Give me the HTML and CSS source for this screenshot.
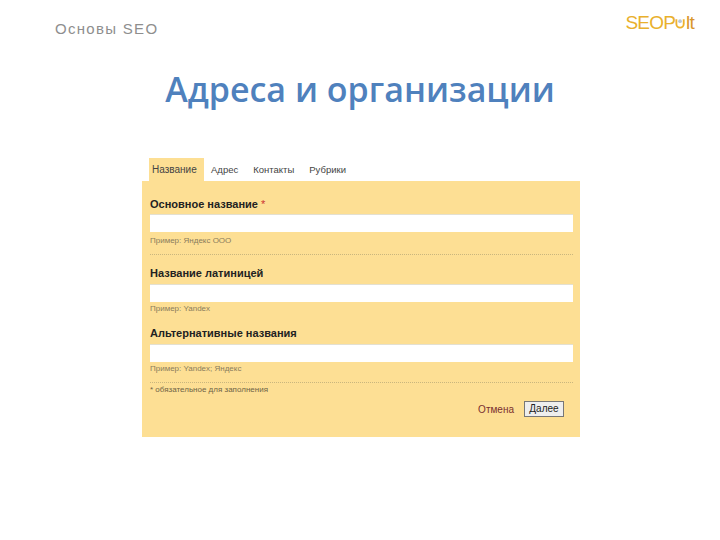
FILE: index.html
```html
<!DOCTYPE html>
<html lang="ru">
<head>
<meta charset="utf-8">
<title>Адреса и организации</title>
<link rel="stylesheet" href="styles.css">
</head>
<body>
<div class="slide">
  <header class="top">
    <span class="course">Основы SEO</span>
    <span class="logo"><span class="logo-seo">SEOP</span><svg class="logo-u" viewBox="0 0 12 12" width="11" height="12"><path d="M1.5 2v5a4 4 0 0 0 8 0V2" fill="none" stroke="#eeb22c" stroke-width="2"/><circle cx="5.5" cy="4" r="2" fill="#b9c6d8"/></svg><span class="logo-lt">lt</span></span>
  </header>
  <h1 class="title">Адреса и организации</h1>
  <div class="form-wrap">
    <nav class="tabs">
      <span class="tab active">Название</span>
      <span class="tab">Адрес</span>
      <span class="tab">Контакты</span>
      <span class="tab">Рубрики</span>
    </nav>
    <form class="panel">
      <div class="field field-main">
        <div class="label">Основное название <span class="req">*</span></div>
        <div class="input"></div>
        <div class="hint">Пример: Яндекс ООО</div>
      </div>
      <div class="field field-latin">
        <div class="label">Название латиницей</div>
        <div class="input"></div>
        <div class="hint">Пример: Yandex</div>
      </div>
      <div class="field field-alt">
        <div class="label">Альтернативные названия</div>
        <div class="input"></div>
        <div class="hint">Пример: Yandex; Яндекс</div>
      </div>
      <div class="note">* обязательное для заполнения</div>
      <div class="actions">
        <span class="cancel">Отмена</span>
        <span class="next">Далее</span>
      </div>
    </form>
  </div>
</div>
</body>
</html>
```
FILE: styles.css
```css
* { box-sizing: border-box; }
html, body { margin: 0; padding: 0; background: #fff; }
.slide { width: 720px; height: 540px; overflow: hidden; font-family: "Liberation Sans", Arial, sans-serif; }
.top { display: flex; justify-content: space-between; align-items: flex-start; padding: 21px 26px 0 55px; height: 68px; }
.course { font-size: 15px; line-height: 16px; letter-spacing: 1.3px; color: #8e8e8e; }
.logo { display: flex; align-items: baseline; margin-top: -9px; font-size: 19px; line-height: 22px; letter-spacing: -0.8px; color: #eeb22c; }
.logo-seo { color: #e9b02c; }
.logo-u { margin: 0 0 -1px 0; }
.logo-lt { color: #d9962a; }
.title { margin: 0; text-align: center; font-family: "Open Sans", sans-serif; font-weight: 600; font-size: 34px; line-height: 42px; color: #4f81bd; }
.form-wrap { width: 438px; margin: 48px 0 0 142px; }
.tabs { display: flex; height: 23px; padding-left: 7px; font-size: 9.5px; color: #444; }
.tab { padding: 6px 11px 0 4px; line-height: 12px; }
.tab.active { background: #fddf94; width: 55px; padding-left: 3px; margin-right: 3px; font-size: 10px; }
.panel { background: #fddf94; height: 256px; padding: 17px 7px 0 8px; }
.field-main { height: 57px; border-bottom: 1px dotted #c9b67e; }
.field-latin { height: 50px; margin-top: 12px; }
.field-alt { height: 56px; margin-top: 10px; border-bottom: 1px dotted #c9b67e; }
.label { font-size: 11px; font-weight: bold; line-height: 13px; color: #222; }
.req { color: #c33; font-weight: normal; }
.input { height: 18px; margin-top: 4px; background: #fff; border-top: 1px solid #e4e0d0; }
.field-main .input { margin-top: 3px; }
.hint { margin-top: 2px; font-size: 8px; line-height: 10px; color: #8a7c5c; }
.field-main .hint { margin-top: 4px; }
.note { margin-top: 2px; font-size: 8px; line-height: 10px; color: #6f6346; }
.actions { display: flex; justify-content: flex-end; align-items: center; gap: 10px; margin-top: 6px; padding-right: 9px; }
.cancel { font-size: 10px; color: #7a3030; }
.next { width: 40px; height: 16px; border: 1px solid #777; background: #eeeeee; font-size: 10px; line-height: 14px; text-align: center; color: #222; }
```
